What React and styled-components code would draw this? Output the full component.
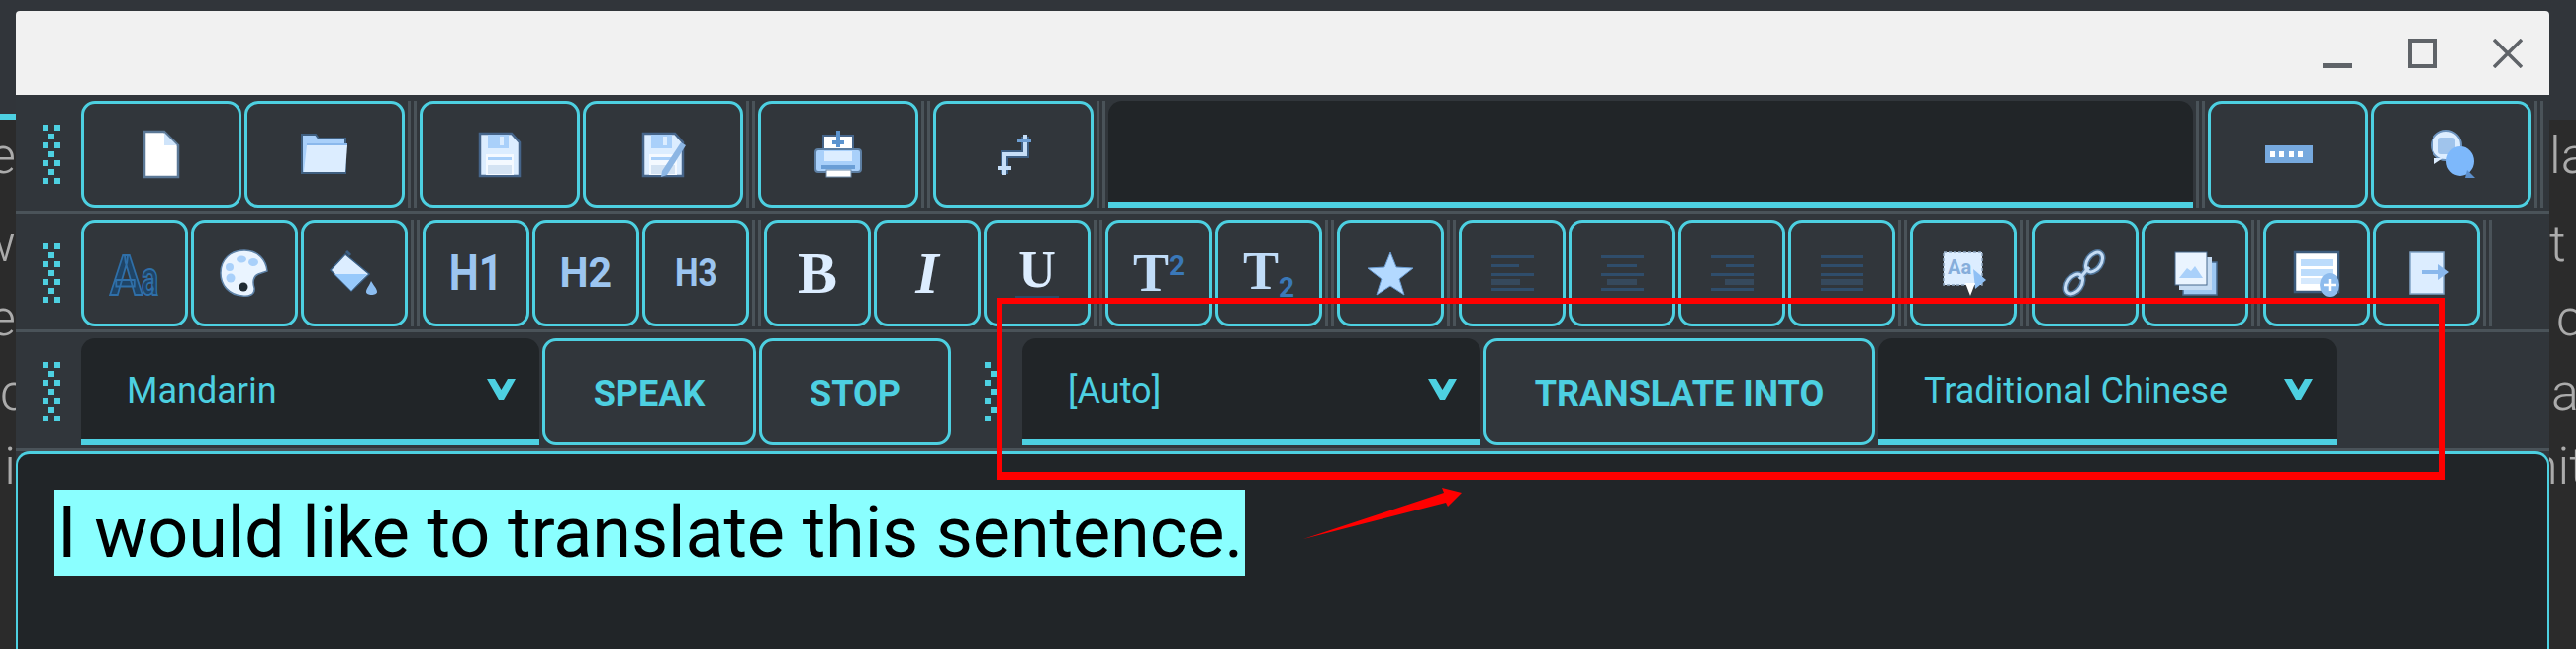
import React from 'react';
import styled, { createGlobalStyle } from 'styled-components';

const CYAN = '#4dd0e1';
const PANEL = '#31363b';
const DARK = '#212528';
const LINE = '#4a5359';

const GlobalStyle = createGlobalStyle`
  html, body {
    margin: 0;
    padding: 0;
    height: 100%;
    background: #2b2b2b;
    overflow: hidden;
    font-family: Roboto, "Liberation Sans", sans-serif;
  }
`;

const Page = styled.div`
  position: relative;
  width: 2603px;
  height: 656px;
  overflow: hidden;
`;

// ===== page behind the window =====
const PageHeader = styled.div`
  height: 121px;
  background: #31353a;
  display: flex;
  align-items: flex-end;
`;

const TabMark = styled.div`
  width: 16px;
  height: 6px;
  background: ${CYAN};
`;

const TextLine = styled.div`
  display: flex;
  align-items: flex-end;
  justify-content: space-between;
  height: ${(p) => p.$h}px;
  font-size: 52px;
  font-weight: 300;
  line-height: 1;
  color: #ababab;
`;

const LeftCut = styled.div`
  width: 16px;
  display: flex;
  justify-content: ${(p) => p.$from || 'flex-end'};
  overflow: hidden;
`;

const RightCut = styled.div`
  width: 27px;
  overflow: hidden;
  white-space: nowrap;
  text-indent: ${(p) => p.$indent || 0}px;
`;

// ===== window =====
const Window = styled.div`
  position: absolute;
  left: 16px;
  top: 11px;
  width: 2560px;
  height: 645px;
  display: flex;
  flex-direction: column;
  background: ${PANEL};
  border-radius: 4px 4px 0 0;
`;

const TitleBar = styled.div`
  height: 85px;
  flex: none;
  background: #f1f1f1;
  border-radius: 4px 4px 0 0;
  display: flex;
  justify-content: flex-end;
  align-items: flex-start;
  gap: 56px;
  padding: 28px 27px 0 0;
  box-sizing: border-box;
`;

const WinIcon = styled.svg`
  width: 30px;
  height: 30px;
  flex: none;
  fill: none;
  stroke: #5f6368;
`;

const Row = styled.div`
  height: 120px;
  flex: none;
  box-sizing: border-box;
  display: flex;
  gap: 3px;
  padding: 6px 0 3px 27px;
  border-bottom: 3px solid ${LINE};
`;

const DotGrid = styled.div`
  flex: none;
  align-self: center;
  display: grid;
  grid-template-columns: repeat(3, 6px);
  grid-auto-rows: 6px;
  row-gap: 3px;
  margin: 0 ${(p) => p.$right}px 0 ${(p) => p.$left || 0}px;
`;

const Dot = styled.span`
  background: ${(p) => (p.$on ? CYAN : 'transparent')};
`;

const Button = styled.div`
  flex: none;
  width: ${(p) => p.$w}px;
  height: 108px;
  box-sizing: border-box;
  border: 3px solid ${CYAN};
  border-radius: 14px;
  background: ${PANEL};
  display: flex;
  align-items: center;
  justify-content: center;
  color: ${CYAN};
  font-size: 36px;
  font-weight: 700;
  white-space: nowrap;
`;

const TextButton = styled(Button)`
  padding-top: 3px;
`;

const Separator = styled.div`
  flex: none;
  width: 9px;
  height: 108px;
  box-sizing: border-box;
  border-left: 3px solid ${LINE};
  border-right: 3px solid ${LINE};
`;

const SearchField = styled.div`
  flex: none;
  width: 1096px;
  height: 108px;
  box-sizing: border-box;
  background: ${DARK};
  border-radius: 14px 14px 0 0;
  border-bottom: 6px solid ${CYAN};
`;

const Select = styled.div`
  flex: none;
  width: 463px;
  height: 108px;
  box-sizing: border-box;
  background: ${DARK};
  border-radius: 14px 14px 0 0;
  border-bottom: 6px solid ${CYAN};
  padding: 0 24px 0 46px;
  display: flex;
  align-items: center;
  justify-content: space-between;
  color: ${CYAN};
  font-size: 36px;
  font-weight: 400;
`;

const SelectLabel = styled.span`
  padding-top: 4px;
`;

const Chevron = styled.svg`
  width: 29px;
  height: 21px;
  fill: ${CYAN};
  flex: none;
`;

const Glyph = styled.svg`
  width: 48px;
  height: 48px;
  flex: none;
  overflow: visible;
`;

const Heading = styled.span`
  display: block;
  font-family: Roboto, sans-serif;
  font-weight: 700;
  font-size: ${(p) => p.$size}px;
  line-height: 1;
  color: #9cc5f0;
  transform: scaleX(${(p) => p.$sx});
`;

const SerifLetter = styled.span`
  font-family: "Liberation Serif", serif;
  font-weight: 700;
  font-style: ${(p) => (p.$italic ? 'italic' : 'normal')};
  font-size: ${(p) => p.$size || 60}px;
  line-height: 1;
  color: ${(p) => p.$color || '#dcedff'};
  ${(p) => (p.$bar ? 'border-bottom: 6px solid #2c4a68; padding: 0 3px;' : '')}
`;

const ScriptMark = styled.span`
  font-family: Roboto, sans-serif;
  font-weight: 700;
  font-size: 28px;
  line-height: 1;
  color: #3a78b8;
  vertical-align: ${(p) => p.$shift}px;
`;

const Lines = styled.div`
  width: 43px;
  display: flex;
  flex-direction: column;
  align-items: ${(p) => p.$align};
  gap: 6px;
`;

const LineBar = styled.span`
  display: block;
  height: ${(p) => (p.$thick ? 6 : 3)}px;
  width: ${(p) => p.$w}px;
  background: ${(p) => (p.$thick ? '#36495c' : '#2f4d6b')};
  margin-top: ${(p) => (p.$thick ? -3 : 0)}px;
  margin-bottom: ${(p) => (p.$thick ? -3 : 0)}px;
`;

const Editor = styled.div`
  flex: 1;
  box-sizing: border-box;
  background: ${DARK};
  border: 2px solid ${CYAN};
  border-top-width: 3px;
  border-bottom: none;
  border-radius: 14px 14px 0 0;
  padding: 36px 0 0 37px;
`;

const Highlight = styled.span`
  display: inline-block;
  background: #8affff;
  color: #000;
  font-size: 72px;
  line-height: 87px;
  font-weight: 400;
  letter-spacing: -0.12px;
  padding: 0 2px 0 3px;
`;

// ===== screenshot annotation on top =====
const RedBox = styled.div`
  position: absolute;
  left: 1007px;
  top: 301px;
  width: 1464px;
  height: 184px;
  box-sizing: border-box;
  border: 6px solid #ff0000;
  border-bottom-width: 8px;
`;

const RedArrow = styled.svg`
  position: absolute;
  left: 1310px;
  top: 488px;
  width: 175px;
  height: 64px;
  fill: #ff0000;
`;

// ===== icons =====
const EDGE = '#46658a';
const PALE = '#dcedff';
const MID = '#a9d0fa';

const FileIcon = () => (
  <Glyph viewBox="0 0 48 48">
    <path d="M7 1H27L41 15V47H7Z" fill="#fff" stroke="#5b7896" strokeWidth="2.5" />
    <path d="M27 2L40 15H27Z" fill="#cfe4fa" />
  </Glyph>
);

const FolderIcon = () => (
  <Glyph viewBox="0 0 48 48">
    <path d="M1 4H15L18 8H45V43H1Z" fill={MID} stroke="#3f5f80" strokeWidth="2" />
    <path d="M6 15H47L45 42H3Z" fill={PALE} />
    <path d="M6 14H47" stroke="#8ab8ec" strokeWidth="2" />
  </Glyph>
);

const FloppyBase = ({ children }) => (
  <Glyph viewBox="0 0 48 48">
    <path d="M4 3H36L44 12V46H4Z" fill={PALE} stroke={EDGE} strokeWidth="2.5" />
    <rect x="12" y="4" width="21" height="14" fill={MID} />
    <rect x="24" y="6" width="4" height="9" fill={PALE} />
    <rect x="10" y="24" width="28" height="21" fill="#f4f9ff" />
    <rect x="12" y="27" width="24" height="3" fill={MID} />
    <rect x="12" y="35" width="24" height="9" fill="#d4e3f3" />
    {children}
  </Glyph>
);

const SaveIcon = () => <FloppyBase />;

const SaveAsIcon = () => (
  <FloppyBase>
    <path d="M23 41L42 12L47 15L28 45L22 47Z" fill="#8cb6e4" />
  </FloppyBase>
);

const PrinterIcon = () => (
  <Glyph viewBox="0 0 48 48">
    <rect x="9" y="5" width="30" height="15" fill="#fff" stroke={EDGE} strokeWidth="2" />
    <path d="M24 0V17M18 12H30" stroke="#5c94cf" strokeWidth="4" />
    <rect x="1" y="19" width="46" height="23" rx="3" fill={MID} stroke="#5d7fa3" strokeWidth="2" />
    <rect x="10" y="21" width="28" height="10" fill={PALE} />
    <rect x="7" y="35" width="34" height="4" fill="#6a9ed6" />
    <rect x="12" y="40" width="25" height="7" fill="#fff" stroke="#6f8cab" strokeWidth="1" />
  </Glyph>
);

const ReturnIcon = () => (
  <Glyph viewBox="0 0 48 48">
    <path d="M36 6V24H15V44" fill="none" stroke="#3d5f84" strokeWidth="8" />
    <path d="M36 4V24H15V45" fill="none" stroke="#c5def7" strokeWidth="4" />
    <path d="M28 10H42" fill="none" stroke="#6d9ed2" strokeWidth="4" />
    <path d="M8 38H22" fill="none" stroke="#c5def7" strokeWidth="4" />
  </Glyph>
);

const KeyboardIcon = () => (
  <Glyph viewBox="0 0 48 48">
    <rect x="1" y="15" width="48" height="18" fill="#76a9de" />
    <rect x="6" y="21" width="5" height="6" fill="#fff" />
    <rect x="15" y="21" width="5" height="6" fill="#fff" />
    <rect x="25" y="21" width="5" height="6" fill="#fff" />
    <rect x="34" y="21" width="5" height="6" fill="#fff" />
  </Glyph>
);

const ChatIcon = () => (
  <Glyph viewBox="0 0 48 48">
    <ellipse cx="19" cy="15" rx="15" ry="15" fill={PALE} stroke="#6d94bf" strokeWidth="2" />
    <rect x="11" y="7" width="17" height="17" rx="3" fill="#a0c4ec" />
    <path d="M7 28V34L16 28Z" fill={PALE} />
    <ellipse cx="33" cy="31" rx="14" ry="15" fill="#7db8fb" />
    <path d="M40 40L48 48H38Z" fill="#5c8fcc" />
  </Glyph>
);

const LetterIcon = () => (
  <Glyph viewBox="0 0 48 48">
    <text x="-1" y="46" fontFamily="Roboto" fontWeight="700" fontSize="56" textLength="33" lengthAdjust="spacingAndGlyphs" fill="#1f4466" stroke="#2f6fa8" strokeWidth="2">A</text>
    <text x="31" y="46" fontFamily="Roboto" fontWeight="700" fontSize="48" textLength="17" lengthAdjust="spacingAndGlyphs" fill="#1f4466" stroke="#2f6fa8" strokeWidth="2">a</text>
  </Glyph>
);

const PaletteIcon = () => (
  <Glyph viewBox="0 0 48 48">
    <path d="M24 1C38 1 46 11 47 22L38 25C33 27 32 33 34 39C35 46 28 48 22 47C8 46 0 36 0 24C0 10 10 1 24 1Z" fill="#eaf4ff" stroke="#5f83a8" strokeWidth="1.5" />
    <circle cx="9" cy="18" r="4" fill={MID} />
    <circle cx="10" cy="29" r="4.5" fill={MID} />
    <ellipse cx="21" cy="10" rx="5" ry="3.5" fill={MID} />
    <ellipse cx="33" cy="13" rx="5" ry="4" fill={MID} />
    <circle cx="23" cy="38" r="4.5" fill="#1f2a33" />
  </Glyph>
);

const BucketIcon = () => (
  <Glyph viewBox="0 0 48 48">
    <path d="M16 2L20 6" stroke="#3a5f85" strokeWidth="3" />
    <path d="M15 5L39 25L21 42L0 21Z" fill={PALE} stroke="#3a5f85" strokeWidth="1.5" />
    <path d="M4 25H37L21 42Z" fill="#97c9fb" />
    <path d="M41 32C44 37 47 40 47 43C47 47 36 47 36 43C36 40 39 37 41 32Z" fill="#8cbdf0" />
  </Glyph>
);

const StarIcon = () => (
  <Glyph viewBox="0 0 48 48">
    <path d="M24 3L30 18L47 19L33 30L38 46L24 37L10 46L15 30L1 19L18 18Z" fill="#b3d9ff" stroke="#6a9bd0" strokeWidth="1" />
  </Glyph>
);

const TranslateIcon = () => (
  <Glyph viewBox="0 0 48 48">
    <rect x="4" y="3" width="39" height="33" fill={PALE} stroke="#8fa6c0" strokeWidth="1.5" strokeDasharray="3 2" />
    <text x="8" y="25" fontFamily="Roboto" fontWeight="700" fontSize="20" fill="#86aedb">Aa</text>
    <path d="M34 20L47 31L36 40Z" fill="#8fc0f5" />
    <path d="M26 34H36L31 47Z" fill="#fff" />
  </Glyph>
);

const LinkIcon = () => (
  <Glyph viewBox="0 0 48 48">
    <g fill="none" stroke="#4f7499" strokeWidth="6">
      <ellipse cx="33" cy="13" rx="7" ry="11" transform="rotate(35 33 13)" />
      <ellipse cx="13" cy="35" rx="7" ry="11" transform="rotate(35 13 35)" />
      <path d="M18 30L28 18" />
    </g>
    <g fill="none" stroke="#c4dcf5" strokeWidth="3">
      <ellipse cx="33" cy="13" rx="7" ry="11" transform="rotate(35 33 13)" />
      <ellipse cx="13" cy="35" rx="7" ry="11" transform="rotate(35 13 35)" />
      <path d="M18 30L28 18" />
    </g>
  </Glyph>
);

const PicturesIcon = () => (
  <Glyph viewBox="0 0 48 48">
    <rect x="12" y="13" width="34" height="33" fill="#9cc7f2" stroke="#47698d" strokeWidth="1.5" />
    <rect x="8" y="8" width="33" height="33" fill="#c6dcf3" />
    <rect x="4" y="3" width="32" height="33" fill="#eaf4ff" stroke="#47698d" strokeWidth="1" />
    <path d="M8 29L16 19L20 22L24 17L32 29Z" fill={MID} />
  </Glyph>
);

const WidgetIcon = () => (
  <Glyph viewBox="0 0 48 48">
    <rect x="2" y="3" width="44" height="40" fill="#fff" stroke="#3d5c7d" strokeWidth="2.5" />
    <rect x="8" y="10" width="32" height="7" fill="#bcdcfc" />
    <rect x="8" y="20" width="32" height="7" fill="#bcdcfc" />
    <rect x="8" y="29" width="22" height="6" fill="#d6e9fd" />
    <ellipse cx="37" cy="36" rx="10" ry="12" fill="#8ebcee" />
    <path d="M37 30V42M31 36H43" stroke="#fff" strokeWidth="2.5" />
  </Glyph>
);

const DoorIcon = () => (
  <Glyph viewBox="0 0 48 48">
    <rect x="7" y="3" width="35" height="42" fill={PALE} stroke="#7fa2c6" strokeWidth="1.5" />
    <path d="M19 21H36V15L47 23L36 31V25H19Z" fill="#8ab8ec" />
  </Glyph>
);

function Gripper({ left, right }) {
  const cells = [];
  for (let r = 0; r < 7; r++) {
    for (let c = 0; c < 3; c++) {
      cells.push(<Dot key={r + '-' + c} $on={(r + c) % 2 === 0} />);
    }
  }
  return (
    <DotGrid $left={left} $right={right}>
      {cells}
    </DotGrid>
  );
}

function AlignIcon({ align, widths }) {
  return (
    <Lines $align={align}>
      {widths.map((w, i) => (
        <LineBar key={i} $w={w} $thick={i === 3} />
      ))}
    </Lines>
  );
}

const ChevronDown = () => (
  <Chevron viewBox="0 0 29 21">
    <path d="M0 0H8L14.5 11L21 0H29L17 21H12Z" />
  </Chevron>
);

const backdrop = [
  { h: 63, left: 'e', right: 'la' },
  { h: 89, left: 'w', right: 't' },
  { h: 75, left: 'e', right: 'c', indent: 7 },
  { h: 75, left: 'c', from: 'flex-start', right: 'a', indent: 2 },
  { h: 75, left: 'i', right: 'nit', indent: -20 },
];

function App() {
  return (
    <Page>
      <GlobalStyle />
      <PageHeader>
        <TabMark />
      </PageHeader>
      {backdrop.map((l, i) => (
        <TextLine key={i} $h={l.h}>
          <LeftCut $from={l.from}>{l.left}</LeftCut>
          <RightCut $indent={l.indent}>{l.right}</RightCut>
        </TextLine>
      ))}

      <Window>
        <TitleBar>
          <WinIcon viewBox="0 0 30 30">
            <path d="M0 27.5H30" strokeWidth="5" />
          </WinIcon>
          <WinIcon viewBox="0 0 30 30">
            <rect x="2" y="2" width="26" height="26" strokeWidth="4" />
          </WinIcon>
          <WinIcon viewBox="0 0 30 30">
            <path d="M1 1L29 29M29 1L1 29" strokeWidth="3.5" />
          </WinIcon>
        </TitleBar>

        <Row>
          <Gripper right={18} />
          <Button $w={162}><FileIcon /></Button>
          <Button $w={162}><FolderIcon /></Button>
          <Separator />
          <Button $w={162}><SaveIcon /></Button>
          <Button $w={162}><SaveAsIcon /></Button>
          <Separator />
          <Button $w={162}><PrinterIcon /></Button>
          <Separator />
          <Button $w={162}><ReturnIcon /></Button>
          <Separator />
          <SearchField />
          <Separator />
          <Button $w={162}><KeyboardIcon /></Button>
          <Button $w={162}><ChatIcon /></Button>
          <Separator />
        </Row>

        <Row>
          <Gripper right={18} />
          <Button $w={108}><LetterIcon /></Button>
          <Button $w={108}><PaletteIcon /></Button>
          <Button $w={108}><BucketIcon /></Button>
          <Separator />
          <Button $w={108}><Heading $size={50} $sx={0.85}>H1</Heading></Button>
          <Button $w={108}><Heading $size={42} $sx={0.98}>H2</Heading></Button>
          <Button $w={108}><Heading $size={38} $sx={0.88}>H3</Heading></Button>
          <Separator />
          <Button $w={108}><SerifLetter>B</SerifLetter></Button>
          <Button $w={108}><SerifLetter $italic>I</SerifLetter></Button>
          <Button $w={108}><SerifLetter $size={52} $bar>U</SerifLetter></Button>
          <Separator />
          <Button $w={108}>
            <span>
              <SerifLetter $size={54} $color="#c0dcf8">T</SerifLetter>
              <ScriptMark $shift={16}>2</ScriptMark>
            </span>
          </Button>
          <Button $w={108}>
            <span>
              <SerifLetter $size={54} $color="#c0dcf8">T</SerifLetter>
              <ScriptMark $shift={-8}>2</ScriptMark>
            </span>
          </Button>
          <Separator />
          <Button $w={108}><StarIcon /></Button>
          <Separator />
          <Button $w={108}><AlignIcon align="flex-start" widths={[43, 28, 43, 29, 43]} /></Button>
          <Button $w={108}><AlignIcon align="center" widths={[43, 30, 43, 30, 43]} /></Button>
          <Button $w={108}><AlignIcon align="flex-end" widths={[43, 28, 43, 29, 43]} /></Button>
          <Button $w={108}><AlignIcon align="stretch" widths={[43, 43, 43, 43, 43]} /></Button>
          <Separator />
          <Button $w={108}><TranslateIcon /></Button>
          <Separator />
          <Button $w={108}><LinkIcon /></Button>
          <Button $w={108}><PicturesIcon /></Button>
          <Separator />
          <Button $w={108}><WidgetIcon /></Button>
          <Button $w={108}><DoorIcon /></Button>
          <Separator />
        </Row>

        <Row>
          <Gripper right={18} />
          <Select>
            <SelectLabel>Mandarin</SelectLabel>
            <ChevronDown />
          </Select>
          <TextButton $w={216}>SPEAK</TextButton>
          <TextButton $w={194}>STOP</TextButton>
          <Gripper left={31} right={17} />
          <Select>
            <SelectLabel>[Auto]</SelectLabel>
            <ChevronDown />
          </Select>
          <TextButton $w={396}>TRANSLATE INTO</TextButton>
          <Select>
            <SelectLabel>Traditional Chinese</SelectLabel>
            <ChevronDown />
          </Select>
        </Row>

        <Editor>
          <Highlight>I would like to translate this sentence.</Highlight>
        </Editor>
      </Window>

      <RedBox />
      <RedArrow viewBox="0 0 175 64">
        <path d="M7 57L149 10L147 5L167 10L153 24L151 20Z" />
      </RedArrow>
    </Page>
  );
}

export default App;
